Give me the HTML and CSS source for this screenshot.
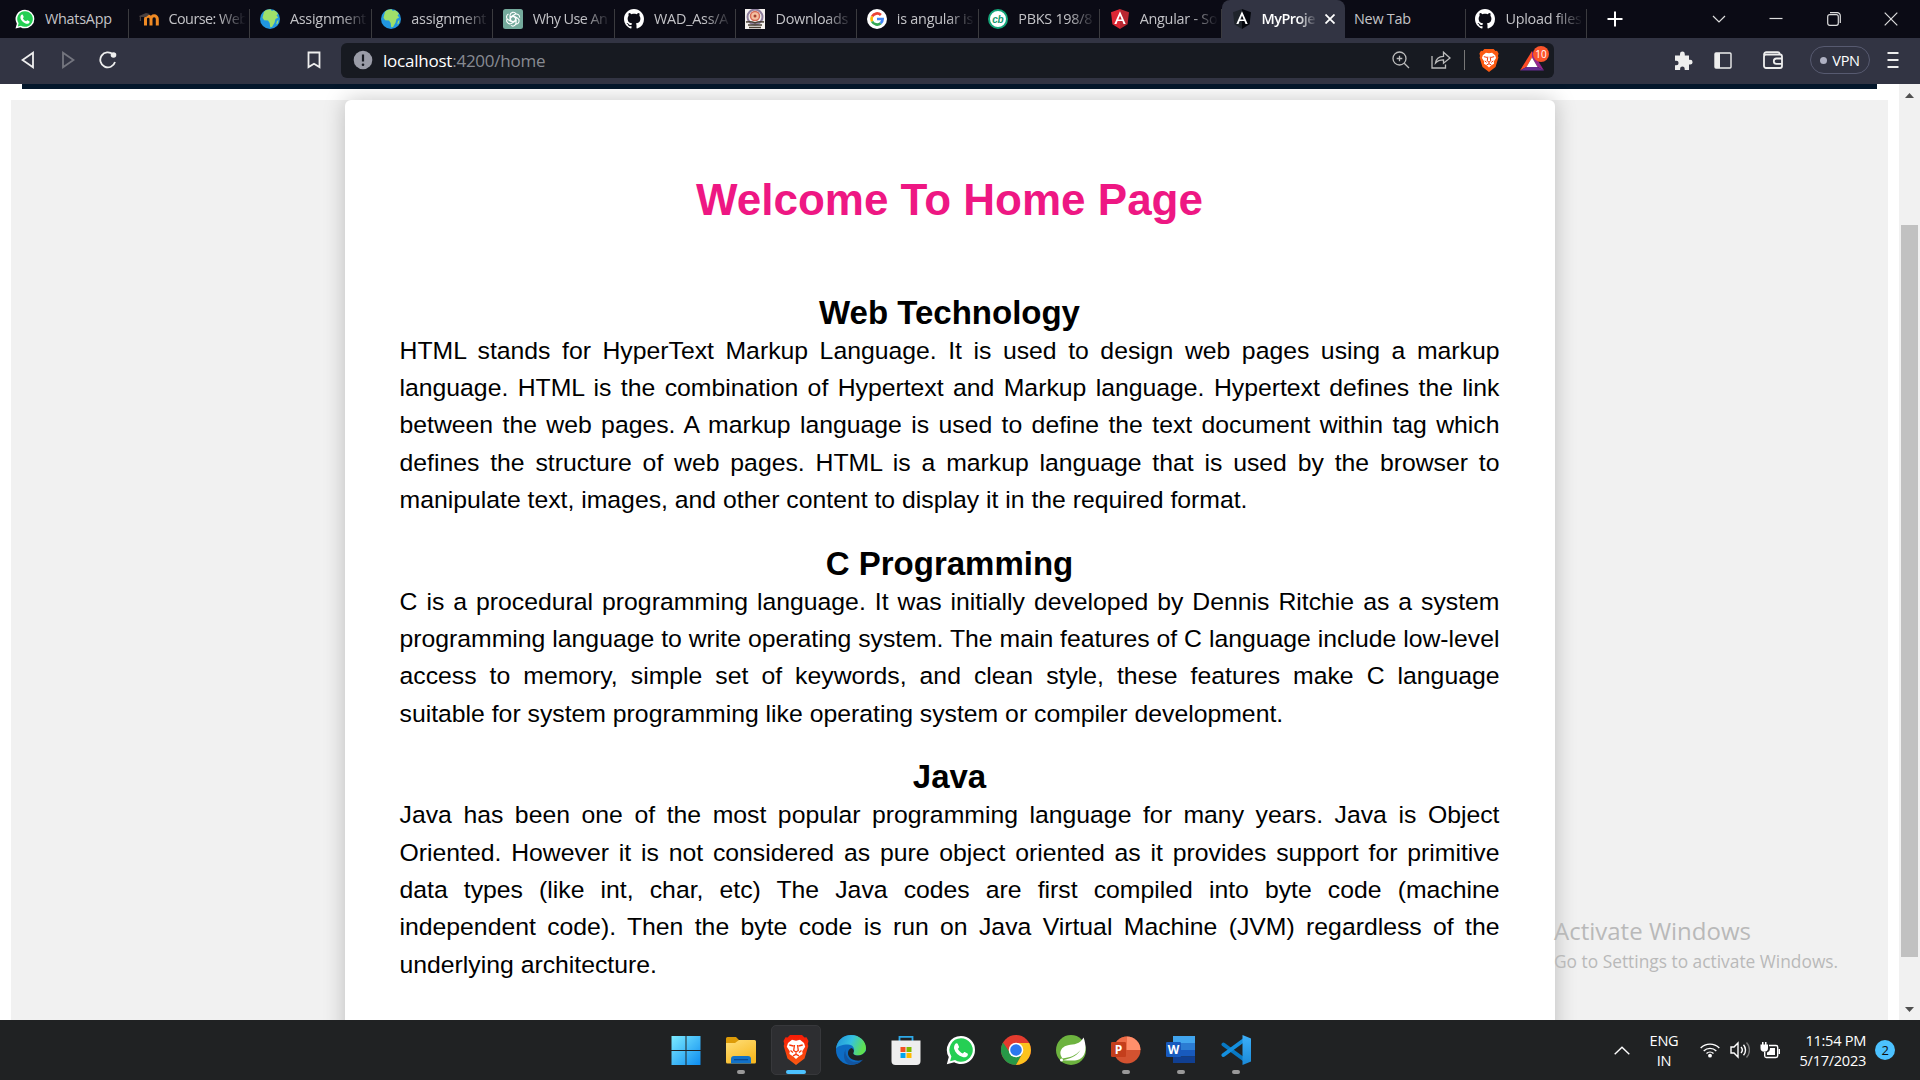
FILE: index.html
```html
<!DOCTYPE html>
<html lang="en">
<head>
<meta charset="utf-8">
<title>MyProject</title>
<link rel="stylesheet" href="styles.css">
</head>
<body>
<svg class="defs" width="0" height="0" aria-hidden="true">
  <defs>
    <linearGradient id="gFolder" x1="0" y1="0" x2="0.6" y2="1"><stop offset="0" stop-color="#ffdf7a"/><stop offset="1" stop-color="#f7b922"/></linearGradient>
    <linearGradient id="gWin" x1="0" y1="0" x2="1" y2="1"><stop offset="0" stop-color="#7cebff"/><stop offset="1" stop-color="#0c8cf0"/></linearGradient>
    <linearGradient id="gBrave" x1="0" y1="0" x2="0" y2="1"><stop offset="0" stop-color="#f61b06"/><stop offset="1" stop-color="#fb5a12"/></linearGradient>
    <linearGradient id="gEdge" x1="0" y1="0" x2="1" y2="0.3"><stop offset="0" stop-color="#1f8fdc"/><stop offset="0.55" stop-color="#35c1e0"/><stop offset="1" stop-color="#5fe052"/></linearGradient>
    <linearGradient id="gVs" x1="0" y1="0" x2="0" y2="1"><stop offset="0" stop-color="#3db0fa"/><stop offset="1" stop-color="#1a8ad8"/></linearGradient>
    <symbol id="whatsapp" viewBox="0 0 30 30">
      <path fill="#fff" d="M15 1a14 14 0 0 1 0 28c-2.500 0-4.800-.6-6.800-1.800L.8 29.200l2-7.200A14 14 0 0 1 15 1z"/>
      <path fill="#25cf54" d="M15 3.300a11.700 11.700 0 1 1-6 21.700l-4.900 1.200 1.300-4.700A11.700 11.700 0 0 1 15 3.300z"/>
      <path fill="#fff" d="M10.500 8.300c.5-.1 1 0 1.300.6l1.200 2.800c.2.500-.1 1-1.200 2.100 1 2.200 2.800 3.800 5 4.700.9-1 1.300-1.700 1.900-1.500l2.800 1.400c.5.300.5 1 .2 1.800-.8 1.900-3 2.400-5 1.800-4.400-1.300-7.300-4.200-8.500-8-.5-2 .4-5.300 2.300-5.700z"/>
    </symbol>
    <symbol id="globe" viewBox="0 0 20 20">
      <circle cx="10" cy="10" r="10" fill="#2196e0"/>
      <path fill="#9fe06a" d="M4 2.800C6 1 8.200.3 10.500.3l1.300 1.800 2-.8c2 .8 3.300 2 4.200 3.500l-1.500 1.700 1.700 2-2.700 1.500-1 3.800-2.500 4.200-1.800.3-.5-4.300-1.700-2.400-3.800-.3L2.500 8.800l.8-3.300z"/>
      <path fill="#9fe06a" d="m17 12 1.500-1-.7 3.500-1.600 1z"/>
    </symbol>
    <symbol id="github" viewBox="0 0 16 16">
      <path fill="#fff" d="M8 0C3.580 0 0 3.580 0 8c0 3.540 2.290 6.530 5.470 7.590.4.070.55-.17.55-.38 0-.19-.01-.82-.01-1.490-2.010.37-2.530-.49-2.690-.94-.09-.23-.48-.94-.82-1.130-.28-.15-.68-.52-.01-.53.63-.01 1.080.58 1.230.82.720 1.210 1.870.87 2.330.66.070-.52.28-.87.51-1.070-1.780-.2-3.640-.89-3.640-3.950 0-.87.31-1.590.82-2.150-.08-.2-.36-1.020.08-2.120 0 0 .67-.21 2.200.82.640-.18 1.320-.27 2-.27s1.360.09 2 .27c1.530-1.040 2.200-.82 2.200-.82.440 1.100.16 1.920.08 2.120.51.560.82 1.270.82 2.150 0 3.070-1.870 3.750-3.650 3.950.29.25.54.73.54 1.480 0 1.070-.01 1.930-.01 2.200 0 .21.15.46.55.38A8.010 8.010 0 0 0 16 8c0-4.420-3.580-8-8-8z"/>
    </symbol>
    <symbol id="brave" viewBox="0 0 26 30">
      <path d="M7 0h12l2.500 2.500 2-.2L25.500 6l-.8 3 .6 2-3.800 12.500L13 30 4.500 23.500.7 11l.6-2-.8-3 2-3.700 2 .2z"/>
      <path fill="#fff" d="m9 4.800 4 .9 4-.9 4 3.200 1.200 3.700-3 4.600.4 2.800-3.800 2.500L13 24l-2.800-2.400-3.800-2.500.4-2.800-3-4.600L5 8z"/>
      <path fill="none" stroke="#f83a0c" stroke-width="1.300" d="m6.300 10 4.200 1M19.700 10l-4.200 1M11.500 10l-.8 5.500 2.300 1.500 2.300-1.500-.8-5.500M7.500 15.500l2.500 2M18.500 15.500l-2.500 2M13 17v2.300M10 20.800l3-1.500 3 1.500"/>
    </symbol>
    <symbol id="angular" viewBox="0 0 20 20">
      <path class="shield-l" d="M10 0 1 3.200l1.400 12L10 20z"/><path class="shield-r" d="m10 0 9 3.200-1.400 12L10 20z"/>
      <path fill="#fff" d="M10 2.300 4.300 15h2.200l1.100-2.900h4.800l1.100 2.900h2.200zm0 4.200 1.700 3.900H8.300z"/>
    </symbol>
  </defs>
</svg>

<div class="screen">
  <header class="tabs">
    <div class="tab tab-first"><svg class="fav"><use href="#whatsapp"/></svg><span class="label">WhatsApp</span></div>
    <div class="tab"><svg class="fav" viewBox="0 0 20 20"><path fill="none" stroke="#f08a24" stroke-width="3" d="M6.500 16.500V10a2.500 2.500 0 0 1 5.500 0v6.500M12 16.500V10a3 3 0 0 1 6.300 0v6.500"/><path fill="#4a4141" d="m0 7 7-3 4 1-4 3H2v4H.8V8z"/></svg><span class="label fade">Course: Web</span></div>
    <div class="tab"><svg class="fav"><use href="#globe"/></svg><span class="label fade">Assignment</span></div>
    <div class="tab"><svg class="fav"><use href="#globe"/></svg><span class="label fade">assignment</span></div>
    <div class="tab"><svg class="fav" viewBox="0 0 20 20"><rect width="20" height="20" rx="2.500" fill="#74aa9c"/><g fill="none" stroke="#fff" stroke-width="1.100"><path id="petal" d="M7 12.200V6.300a3.200 3.200 0 0 1 6-1.300M7.100 8.200l5-2.900a3.200 3.200 0 0 1 4.500 3.300"/><use href="#petal" transform="rotate(120 10 10)"/><use href="#petal" transform="rotate(240 10 10)"/><path d="m10 7.300 2.400 1.400v2.700L10 12.700l-2.400-1.300V8.700z"/></g></svg><span class="label fade">Why Use An</span></div>
    <div class="tab"><svg class="fav"><use href="#github"/></svg><span class="label fade">WAD_Ass/A</span></div>
    <div class="tab"><svg class="fav" viewBox="0 0 20 20"><path fill="#f4f0ee" d="M0 0h20v20H0z"/><circle cx="10" cy="8" r="7.500" fill="none" stroke="#8e7e9d" stroke-width="2"/><circle cx="10" cy="7" r="4.500" fill="#f5c0a0" stroke="#d66c59" stroke-width="1.500"/><circle cx="10" cy="7" r="1.500" fill="#a64030"/><path fill="none" stroke="#4a4035" stroke-width="1.500" d="M1 13q5-1 9 1 4-2 9-1M4 18.500h12M3 16h14"/></svg><span class="label fade">Downloads</span></div>
    <div class="tab"><svg class="fav" viewBox="0 0 20 20"><circle cx="10" cy="10" r="10" fill="#fff"/><g fill="none" stroke-width="2.700"><path stroke="#ea4335" d="M5.100 7.500a5.600 5.600 0 0 1 8.800-1.500"/><path stroke="#fbbc05" d="M5.100 12.500a5.600 5.600 0 0 1 0-5"/><path stroke="#34a853" d="M13.700 14.200a5.600 5.600 0 0 1-8.600-1.700"/><path stroke="#4285f4" d="M10 10h5.600a5.600 5.600 0 0 1-1.900 4.200"/></g></svg><span class="label fade">is angular is</span></div>
    <div class="tab"><svg class="fav" viewBox="0 0 20 20"><circle cx="10" cy="10" r="9" fill="#fff" stroke="#14a579" stroke-width="2"/><text x="4.300" y="13.500" class="cb">cb</text></svg><span class="label fade">PBKS 198/8</span></div>
    <div class="tab"><svg class="fav red"><use href="#angular"/></svg><span class="label fade">Angular - So</span></div>
    <div class="tab active"><svg class="fav dark"><use href="#angular"/></svg><span class="label fade">MyProje</span><svg class="close" viewBox="0 0 10 10"><path d="m.5.500 9 9m0-9-9 9"/></svg></div>
    <div class="tab bare"><span class="label">New Tab</span></div>
    <div class="tab"><svg class="fav"><use href="#github"/></svg><span class="label fade">Upload files</span></div>
    <svg class="plus" viewBox="0 0 16 16"><path d="M8 .5v15M.5 8h15"/></svg>
    <div class="window-controls">
      <svg width="14" height="14" viewBox="0 0 14 14"><path d="m1 4 6 6 6-6"/></svg>
      <svg width="14" height="14" viewBox="0 0 14 14"><path d="M.5 6.500h13"/></svg>
      <svg width="14" height="14" viewBox="0 0 14 14"><rect x=".7" y="2.700" width="10.600" height="10.600" rx="2"/><path d="M3 .7h7a3 3 0 0 1 3.300 3V11"/></svg>
      <svg width="14" height="14" viewBox="0 0 14 14"><path d="m.7.700 12.600 12.600m0-12.600L.7 13.300"/></svg>
    </div>
  </header>

  <nav class="toolbar">
    <div class="nav-left">
      <svg width="14" height="18" viewBox="0 0 14 18"><path d="M12 1.800v14.400L1.500 9z"/></svg>
      <svg class="dim" width="14" height="18" viewBox="0 0 14 18"><path d="M2 1.800v14.400L12.500 9z"/></svg>
      <svg class="reload" width="18" height="18" viewBox="0 0 18 18"><path d="M14 3.500A7.500 7.500 0 1 0 16 11"/><circle cx="14.500" cy="4" r="2.800" fill="#eee" stroke="none"/></svg>
    </div>
    <svg class="bookmark" width="14" height="18" viewBox="0 0 14 18"><path d="M1.500 1.500h11v14.600L7 12.800l-5.500 3.300z"/></svg>
    <div class="address">
      <svg width="20" height="20" viewBox="0 0 20 20"><circle cx="10" cy="10" r="9.300" fill="#9a9ca7"/><path d="M10 4.500v7" stroke="#171a21" stroke-width="2.200"/><circle cx="10" cy="14.700" r="1.300" fill="#171a21"/></svg>
      <div class="url"><b>localhost</b>:4200/home</div>
      <div class="address-icons">
        <svg width="18" height="18" viewBox="0 0 18 18"><circle cx="7.500" cy="7.500" r="6.500"/><path d="m12.200 12.200 4.800 4.800M7.500 4.700v5.600M4.700 7.500h5.600"/></svg>
        <svg class="share" width="20" height="18" viewBox="0 0 20 18"><path d="M1 5v12h13.500v-3.500M4.500 12C5 7.700 8 5.500 12.500 5.300V1.200L19 7l-6.500 5.200V8.900C9 8.800 6.500 9.800 4.500 12z"/></svg>
        <i class="bar"></i>
        <svg class="lion" width="20" height="23" fill="#fb5a12"><use href="#brave"/></svg>
        <div class="bat"><svg width="24" height="20" viewBox="0 0 24 20"><path fill="#ff4c27" d="M12 0 0 19.500l6.500-3.500L12 6.500z"/><path fill="#93278f" d="m12 0 12 19.500-6.500-3.500L12 6.500z"/><path fill="#662d91" d="M0 19.500h24L17.500 16h-11z"/><path fill="#fff" d="m12 6.500 5.500 9.500h-11z"/></svg><span>10</span></div>
      </div>
    </div>
    <div class="nav-right">
      <svg width="19" height="19" viewBox="0 0 19 19"><path fill="#eee" stroke="none" d="M1 4.500h5V3a2.400 2.400 0 0 1 4.800 0v1.500H15v4.300h1.200a2.400 2.400 0 0 1 0 4.800H15V19h-4.300v-1.300a2.300 2.300 0 0 0-4.600 0V19H1v-4.700h1.300a2.300 2.300 0 0 0 0-4.600H1z"/></svg>
      <svg width="18" height="17" viewBox="0 0 18 17"><rect x="1" y="1" width="16" height="15" rx="1" stroke-width="1.400"/><path fill="#eee" stroke="none" d="M1 1h5v15H1z"/></svg>
      <svg class="wallet" width="20" height="18" viewBox="0 0 20 18"><rect x="1" y="3.500" width="18" height="13.500" rx="2"/><path d="M1 4.500C1 2 2 1.200 3.500 1.200h11c1.500 0 2.200.8 2.200 2.300M19 7.500h-5.500a2.700 2.700 0 0 0 0 5.400H19"/></svg>
      <div class="vpn"><i></i>VPN</div>
      <svg class="menu" width="12" height="18" viewBox="0 0 12 18"><path d="M.5 2h11m-11 7h11m-11 7h11"/></svg>
    </div>
  </nav>

  <div class="viewport">
    <div class="page">
      <div class="navbar-edge"></div>
      <main class="home">
        <article class="card">
          <h1>Welcome To Home Page</h1>
          <h2>Web Technology</h2>
          <p>HTML stands for HyperText Markup Language. It is used to design web pages using a markup language. HTML is the combination of Hypertext and Markup language. Hypertext defines the link between the web pages. A markup language is used to define the text document within tag which defines the structure of web pages. HTML is a markup language that is used by the browser to manipulate text, images, and other content to display it in the required format.</p>
          <h2>C Programming</h2>
          <p>C is a procedural programming language. It was initially developed by Dennis Ritchie as a system programming language to write operating system. The main features of C language include low-level access to memory, simple set of keywords, and clean style, these features make C language suitable for system programming like operating system or compiler development.</p>
          <h2>Java</h2>
          <p>Java has been one of the most popular programming language for many years. Java is Object Oriented. However it is not considered as pure object oriented as it provides support for primitive data types (like int, char, etc) The Java codes are first compiled into byte code (machine independent code). Then the byte code is run on Java Virtual Machine (JVM) regardless of the underlying architecture.</p>
        </article>
      </main>
    </div>
    <div class="scrollbar">
      <svg width="9" height="5" viewBox="0 0 9 5"><path d="M0 5 4.500 0 9 5z"/></svg>
      <i class="thumb"></i>
      <svg class="down" width="9" height="5" viewBox="0 0 9 5"><path d="M0 0h9L4.500 5z"/></svg>
    </div>
    <div class="watermark"><div class="wm-title">Activate Windows</div><div class="wm-sub">Go to Settings to activate Windows.</div></div>
  </div>

  <footer class="taskbar">
    <div class="apps">
      <div class="app"><svg viewBox="0 0 30 30"><path fill="url(#gWin)" d="M.5 1h14v14H.5zm15 0h14v14h-14zM.5 16h14v14H.5zm15 0h14v14h-14z"/></svg></div>
      <div class="app run"><svg viewBox="0 0 30 30"><path fill="#dd9b08" d="M0 3.500A1.500 1.500 0 0 1 1.500 2H10l3.500 3.500L10 9H0z"/><path fill="url(#gFolder)" d="M0 8h9l4-3h15.500A1.500 1.500 0 0 1 30 6.500V27a1.500 1.500 0 0 1-1.500 1.500h-27A1.500 1.500 0 0 1 0 27z"/><path fill="#1272c8" d="M5 28.500V24a3 3 0 0 1 3-3h14a3 3 0 0 1 3 3v4.500z"/><path fill="#0a4a94" d="M8 24h14v1.300H8z"/></svg></div>
      <div class="app run current"><svg viewBox="0 0 26 30" fill="url(#gBrave)"><use href="#brave"/></svg></div>
      <div class="app"><svg viewBox="0 0 30 30"><circle cx="15" cy="15" r="15" fill="#0d6cc4"/><path fill="url(#gEdge)" d="M0 14C1 5 7.500 0 15 0c9 0 15 6.500 15 13 0 5-4 7.500-8 7.500-3.500 0-5.500-1.500-4.500-3 2-3.500-.5-8-5.500-8C6 9.500 1.500 11 0 14z"/><path fill="#1255a0" d="M9.500 14.500c-1 6 4 12.500 10 12.500 3 0 6-1 8-3.200C25 28 20 30 15.500 30 9 29 6 22 9.500 14.500z"/><path fill="#202223" d="M17.500 17.500c-1 1.500 1 3 4.500 3 3 0 5.500-1.500 8-4.500v9l-2.300-.7c-2 1-4.700 1.700-7.700 1.200-5-.8-8.500-4-8-8 .2-2 1.500-4 3.500-4.500 2 1 3 2.500 2 4.500z"/></svg></div>
      <div class="app"><svg viewBox="0 0 30 30"><path fill="none" stroke="#2da9e8" stroke-width="1.800" d="M8.500 7V1.900h13V7"/><path fill="#eee" d="M.5 5.500h29V26a4 4 0 0 1-4 4h-21a4 4 0 0 1-4-4z"/><path fill="#f25022" d="M9.500 12h5v5h-5z"/><path fill="#7fba00" d="M15.500 12h5v5h-5z"/><path fill="#00a4ef" d="M9.500 18h5v5h-5z"/><path fill="#ffb900" d="M15.500 18h5v5h-5z"/></svg></div>
      <div class="app"><svg><use href="#whatsapp"/></svg></div>
      <div class="app"><svg viewBox="0 0 30 30"><circle cx="15" cy="15" r="15" fill="#e33b2e"/><path fill="#279847" d="M2 7.500A15 15 0 0 0 15 30l6.500-11.500h-12z"/><path fill="#fcc31e" d="M15 30A15 15 0 0 0 28.200 8H15l6.500 10.500z"/><circle cx="15" cy="15" r="7.300" fill="#fff"/><circle cx="15" cy="15" r="5.800" fill="#2b78ee"/></svg></div>
      <div class="app"><svg viewBox="0 0 30 30"><circle cx="15" cy="15" r="15" fill="#6db33f"/><path fill="#fff" d="M27.500 2.500C32 14 29 25 19 25.500c-4 .2-8 0-12.500-.3C13 24 20 22 24.500 15c-5 6-11 7.500-18 8.500C2 18 5 11.500 12 10.200c6-1 12-.7 15.500-7.700z"/><circle cx="5.500" cy="25" r="1.500" fill="#fff"/></svg></div>
      <div class="app run"><svg viewBox="0 0 30 30"><circle cx="16" cy="15" r="13.500" fill="#d35230"/><path fill="#ff8f6b" d="M16 1.500V15h13.500A13.500 13.500 0 0 0 16 1.500z"/><path fill="#ed6c47" d="M16 1.500A13.500 13.500 0 0 0 2.500 15H16z"/><rect y="7" width="15" height="15" rx="1.300" fill="#c43e1c"/><text class="letter" x="3.700" y="18.700">P</text></svg></div>
      <div class="app run"><svg viewBox="0 0 30 30"><path fill="#41a5ee" d="M7 1h22v7H7z"/><path fill="#2b7cd3" d="M7 8h22v7H7z"/><path fill="#185abd" d="M7 15h22v6.500H7z"/><path fill="#103f91" d="M7 21.500h22V28H7z"/><rect y="7" width="15" height="15" rx="1.300" fill="#185abd"/><text class="letter" x="1.700" y="18.700">W</text></svg></div>
      <div class="app run"><svg viewBox="0 0 30 30"><path fill="none" stroke="#0879c4" stroke-width="4" stroke-linecap="round" d="m2.500 9.500 20.500 15"/><path fill="none" stroke="#1490df" stroke-width="4" stroke-linecap="round" d="m2.500 20 20.500-15"/><path fill="url(#gVs)" d="m21.500 0 8.500 3.500v23L21.500 30z"/></svg></div>
    </div>
    <div class="tray">
      <svg width="16" height="9" viewBox="0 0 16 9"><path d="m.7 8.200 7.300-7 7.300 7"/></svg>
      <div class="lang">ENG<br>IN</div>
      <div class="status">
        <svg width="20" height="16" viewBox="0 0 20 16"><path d="M.7 6a13.200 13.200 0 0 1 18.600 0M3.700 8.900a9 9 0 0 1 12.600 0M6.500 11.600a5 5 0 0 1 7 0"/><circle cx="10" cy="13.700" r="1.900" fill="#fff" stroke="none"/></svg>
        <svg width="20" height="18" viewBox="0 0 20 18"><path d="M1 6v6h3l4 4V2L4 6zM11 6a4.500 4.500 0 0 1 0 6M13.500 3.700a8 8 0 0 1 0 10.600"/><path stroke="#777" d="M16.500 1.500a11 11 0 0 1 0 15"/></svg>
        <svg width="20" height="17" viewBox="0 0 20 17"><path d="M9 3.500h7a1.700 1.700 0 0 1 1.700 1.700v8.600a1.700 1.700 0 0 1-1.700 1.700H6.500A1.700 1.700 0 0 1 4.700 14v-4"/><path fill="#fff" stroke="none" d="M10 6h5v7H7v-2.500q3-1 3-4.500zM18.500 7H20v5h-1.500zM.5 2.500H8V6a3.500 3.500 0 0 1-7.500 0zM2 0h1.500v3H2zm3 0h1.500v3H5z"/></svg>
      </div>
      <div class="clock">11:54 PM<br>5/17/2023</div>
      <div class="count">2</div>
    </div>
  </footer>
</div>
</body>
</html>
```
FILE: styles.css
```css
* { box-sizing: border-box; }
body { margin: 0; background: #fff; font-family: "Open Sans", "Noto Sans", sans-serif; }
.defs { position: absolute; }
.screen { width: 1920px; height: 1080px; display: flex; flex-direction: column; overflow: hidden; }
svg { flex: none; display: block; }

/* tab strip */
.tabs { height: 38px; flex: none; display: flex; background: #0b0b15; color: #c3c3c7; font-size: 14.4px; letter-spacing: -0.25px; }
.tab { width: 121.400px; flex: none; display: flex; align-items: center; padding: 0 4px 0 9.500px; position: relative; white-space: nowrap; }
.tab::after { content: ""; position: absolute; right: 0; top: 9px; bottom: 0; width: 1px; background: #3b3b3f; }
.tab-first { width: 129px; padding-left: 15px; }
.fav { width: 20px; height: 20px; margin-right: 10px; }
.label { overflow: hidden; flex: 1; line-height: 30px; }
.fade { -webkit-mask-image: linear-gradient(90deg, #000 65%, transparent); mask-image: linear-gradient(90deg, #000 65%, transparent); }
.tab:nth-child(2) .label, .tab:nth-child(5) .label { letter-spacing: -0.550px; }
.tab.active { background: #323443; border-radius: 8px 8px 0 0; color: #fff; font-weight: 600; padding: 0 10px; width: 123px; letter-spacing: -0.500px; }
.active .label { flex: none; width: 55px; }
.active::after { display: none; }
.close { width: 10px; height: 10px; margin-left: auto; stroke: #fff; stroke-width: 1.800; }
.cb { font: italic bold 10px "Liberation Sans", sans-serif; fill: #159a70; }
.red { --l: #dd2734; --r: #b82630; }
.dark { --l: #1f242b; --r: #05070d; }
.shield-l { fill: var(--l); }
.shield-r { fill: var(--r); }
.plus { width: 16px; height: 16px; margin: 11px 0 0 20px; stroke: #fff; stroke-width: 2; }
.window-controls { margin: 12px 22px 0 auto; display: flex; gap: 43.500px; fill: none; stroke: #ddd; stroke-width: 1.200; }

/* toolbar */
.toolbar { height: 46px; flex: none; display: flex; align-items: center; background: #323443; padding: 0 21px 2px 21px; fill: none; stroke: #eee; stroke-width: 1.800; }
.nav-left { display: flex; gap: 26px; width: 286px; flex: none; }
.reload { margin-left: -2px; }
.dim { opacity: .35; }
.address { flex: none; margin-left: 20px; width: 1213px; height: 35px; background: #171a21; border-radius: 6px; display: flex; align-items: center; padding: 0 5px 0 12px; }
.address > svg { stroke: none; }
.address > svg path { stroke: #171a21; }
.url { font-size: 17px; letter-spacing: -0.230px; color: #878a92; margin-left: 10px; }
.url b { font-weight: 400; color: #fff; }
.address-icons { margin-left: auto; display: flex; align-items: center; stroke: #bbb; stroke-width: 1.300; }
.share { margin-left: 21px; }
.bar { width: 1px; height: 20px; background: #777; margin: 0 14px 0 13px; }
.lion, .bat svg { stroke: none; }
.bat { position: relative; margin-left: 21px; width: 29px; height: 22px; padding-top: 2px; }
.bat span { position: absolute; right: 0; top: -3px; width: 16px; height: 16px; border-radius: 50%; background: #fb542b; color: #fff; font-size: 10px; line-height: 16px; text-align: center; letter-spacing: 0; }
.nav-right { margin-left: auto; display: flex; align-items: center; }
.nav-right svg:nth-child(2) { margin-left: 21px; }
.nav-right .wallet { margin-left: 31px; }
.vpn { width: 60px; height: 28px; margin: 0 17px 0 27px; border: 1px solid #575a70; border-radius: 14px; display: flex; align-items: center; justify-content: center; gap: 5px; color: #fff; font-size: 14.500px; letter-spacing: -0.300px; }
.vpn i { width: 7px; height: 7px; border-radius: 50%; background: #aeb0c2; }

/* page */
.viewport { height: 936px; flex: none; display: flex; position: relative; overflow: hidden; }
.page { flex: 1; padding: 0 11px; }
.navbar-edge { height: 5px; margin: 0 11px 11px; background: #04172b; }
.home { background: #f1f1f1; height: 960px; display: flex; justify-content: center; }
.card { width: 1210px; background: #fff; border-radius: 6px; box-shadow: 0 0 22px rgba(0, 0, 0, .22); padding: 75px 55px 0; font-family: "Liberation Sans", Arial, sans-serif; color: #000; }
h1 { margin: 0 0 68.500px; font-size: 44px; line-height: 50px; text-align: center; color: #ee1783; }
h2 { margin: 0; font-size: 33px; line-height: 38px; text-align: center; }
p { margin: 0 0 26px; font-size: 24.770px; line-height: 37.400px; text-align: justify; }
.scrollbar { width: 21px; flex: none; display: flex; flex-direction: column; align-items: center; background: #f1f1f1; fill: #505050; padding: 9px 0 8px; }
.thumb { width: 17px; height: 732px; margin-top: 127px; background: #c1c1c1; }
.down { margin-top: auto; }
.watermark { position: absolute; left: 1554px; top: 829px; color: #b9b9b9; white-space: nowrap; }
.wm-title { font-size: 24px; line-height: 36px; }
.wm-sub { font-size: 17.350px; line-height: 24px; }

/* taskbar */
.taskbar { flex: 1; display: flex; background: #202223; }
.apps { margin-left: 661px; display: flex; gap: 5px; padding-top: 5px; }
.app { width: 50px; height: 50px; padding-top: 10px; border-radius: 5px; position: relative; }
.app svg { width: 30px; height: 30px; margin: 0 auto; }
.run::after { content: ""; position: absolute; left: 21px; bottom: 1px; width: 8px; height: 4px; border-radius: 2px; background: #999; }
.current { background: #2d2e31; border: 1px solid #37383b; padding-top: 9px; }
.current::after { left: 14px; bottom: 0; width: 20px; background: #4cc2ff; }
.letter { font: bold 12px "Open Sans", sans-serif; fill: #fff; }
.tray { margin-left: auto; padding-right: 25px; display: flex; align-items: center; color: #fff; font-size: 14.600px; line-height: 20px; letter-spacing: -0.300px; fill: none; stroke: #fff; stroke-width: 1.400; }
.lang { width: 40px; margin-left: 14px; text-align: center; }
.status { display: flex; gap: 10px; margin-left: 16px; align-items: center; }
.clock { width: 86px; margin-right: 9px; text-align: right; }
.count { width: 20px; height: 20px; border-radius: 50%; background: #4cc2ff; color: #111; text-align: center; font-size: 13px; }
```
